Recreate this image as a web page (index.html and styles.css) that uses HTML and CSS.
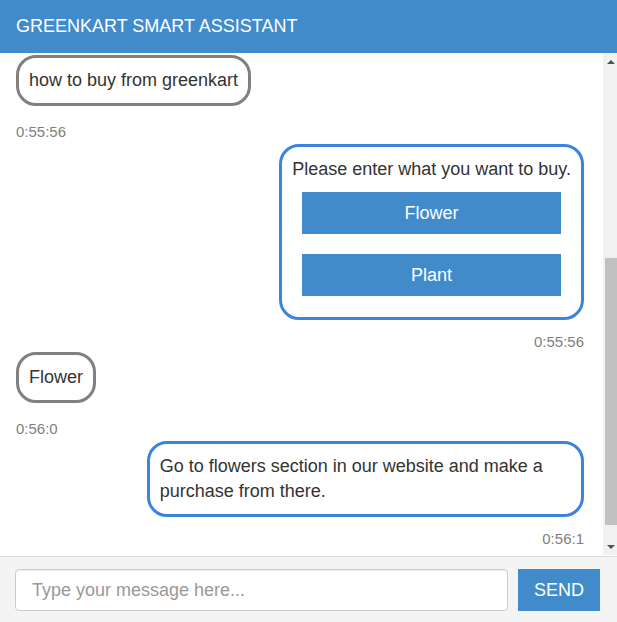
FILE: index.html
```html
<!DOCTYPE html>
<html lang="en">
<head>
<meta charset="utf-8">
<meta name="viewport" content="width=device-width, initial-scale=1">
<title>Greenkart Smart Assistant</title>
<link rel="stylesheet" href="styles.css">
</head>
<body>
<div class="chat">
  <header class="chat-header">
    <h1 class="chat-title">GREENKART SMART ASSISTANT</h1>
  </header>
  <div class="chat-body">
    <main class="messages">
      <div class="message user">
        <p class="bubble">how to buy from greenkart</p>
        <time class="time">0:55:56</time>
      </div>
      <div class="message bot">
        <div class="bubble">
          <p class="text">Please enter what you want to buy.</p>
          <div class="options">
            <button class="button" type="button">Flower</button>
            <button class="button" type="button">Plant</button>
          </div>
        </div>
        <time class="time">0:55:56</time>
      </div>
      <div class="message user">
        <p class="bubble">Flower</p>
        <time class="time">0:56:0</time>
      </div>
      <div class="message bot">
        <p class="bubble">Go to flowers section in our website and make a purchase from there.</p>
        <time class="time">0:56:1</time>
      </div>
    </main>
    <div class="scrollbar" aria-hidden="true">
      <svg class="arrow" viewBox="0 0 8 4"><path d="M0 4 4 0 8 4z"/></svg>
      <div class="track"><div class="thumb"></div></div>
      <svg class="arrow" viewBox="0 0 8 4"><path d="M0 0h8L4 4z"/></svg>
    </div>
  </div>
  <form class="composer">
    <input class="field" type="text" aria-label="Message" placeholder="Type your message here...">
    <button class="button" type="button">SEND</button>
  </form>
</div>
</body>
</html>
```
FILE: styles.css
```css
* {
  box-sizing: border-box;
}

body {
  margin: 0;
  background: #fff;
  color: #333;
  font: 18px/25px "Liberation Sans", Arial, sans-serif;
}

p {
  margin: 0;
}

.chat {
  display: flex;
  flex-direction: column;
  min-height: 100vh;
}

.chat-header {
  padding: 14px 16px;
  background: #428bca;
  color: #fff;
}

.chat-title {
  margin: 0;
  font-size: 18px;
  font-weight: 400;
}

.chat-body {
  display: flex;
  flex: 1;
}

.messages {
  flex: 1;
  padding: 2px 19px 4px 16px;
}

.message {
  display: flex;
  flex-direction: column;
  align-items: flex-start;
  gap: 16px;
  padding-bottom: 2px;
}

.message.bot {
  align-items: flex-end;
  gap: 12px;
  padding-bottom: 0;
}

.bubble {
  max-width: 77%;
  padding: 10px;
  border: 3px solid #808080;
  border-radius: 20px;
}

.bot .bubble {
  border-color: #3c82e0;
}

.time {
  color: #808080;
  font-size: 15px;
  line-height: 20px;
}

.options {
  display: grid;
  gap: 20px;
  padding: 10px 10px 11px;
}

.button {
  height: 42px;
  padding: 0 16px;
  border: 0;
  background: #428bca;
  color: #fff;
  font: inherit;
  cursor: pointer;
}

.scrollbar {
  display: flex;
  flex-direction: column;
  justify-content: space-between;
  width: 14px;
  padding: 7px 0 6px;
  margin-bottom: 1px;
  background: #f1f1f1;
}

.arrow {
  width: 8px;
  height: 4px;
  margin-left: 4px;
  fill: #505050;
}

.track {
  display: flex;
  flex-direction: column;
  justify-content: flex-end;
  flex: 1;
  padding: 0 0 20px 2px;
}

.thumb {
  height: 58%;
  background: #c1c1c1;
}

.composer {
  display: flex;
  gap: 10px;
  padding: 12px 17px 11px 15px;
  border-top: 1px solid #ddd;
  background: #f4f4f4;
}

.field {
  flex: 1;
  min-width: 0;
  height: 42px;
  padding: 0 16px;
  border: 1px solid #ccc;
  border-radius: 4px;
  background: #fff;
  box-shadow: inset 0 1px 1px rgba(0, 0, 0, 0.075);
  color: #333;
  font: inherit;
}

.field::placeholder {
  color: #999;
}
```
